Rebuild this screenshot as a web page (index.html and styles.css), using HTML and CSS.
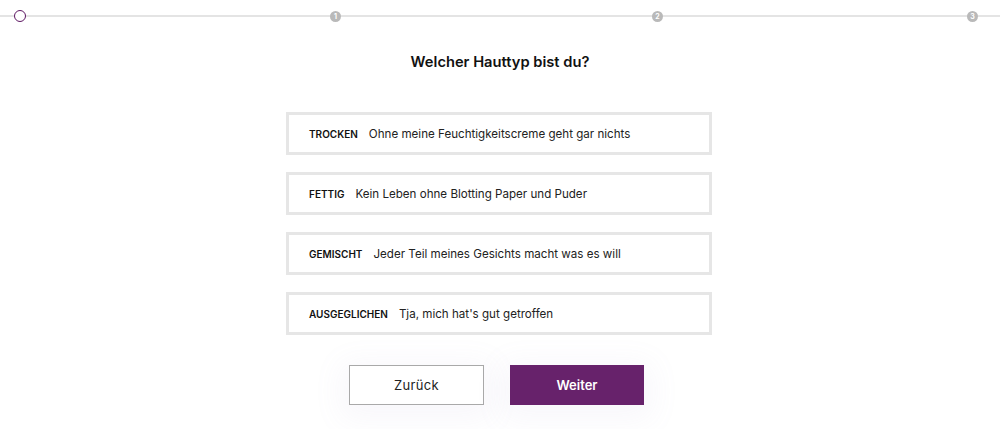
FILE: index.html
```html
<!DOCTYPE html>
<html lang="de">
<head>
<meta charset="utf-8">
<title>Hauttyp</title>
<link rel="stylesheet" href="styles.css">
</head>
<body>
<div class="page">
  <div class="progress">
    <div class="track"></div>
    <div class="steps">
      <span class="step current"></span>
      <span class="step s1">1</span>
      <span class="step s2">2</span>
      <span class="step s3">3</span>
    </div>
  </div>
  <h1 class="title">Welcher Hauttyp bist du?</h1>
  <div class="options">
    <div class="option"><span class="label">TROCKEN</span><span class="desc">Ohne meine Feuchtigkeitscreme geht gar nichts</span></div>
    <div class="option"><span class="label">FETTIG</span><span class="desc">Kein Leben ohne Blotting Paper und Puder</span></div>
    <div class="option"><span class="label">GEMISCHT</span><span class="desc">Jeder Teil meines Gesichts macht was es will</span></div>
    <div class="option"><span class="label">AUSGEGLICHEN</span><span class="desc">Tja, mich hat's gut getroffen</span></div>
  </div>
  <div class="actions">
    <button class="btn btn-back">Zurück</button>
    <button class="btn btn-next">Weiter</button>
  </div>
</div>
</body>
</html>
```

FILE: styles.css
```css
* { box-sizing: border-box; }
html, body { margin: 0; padding: 0; background: #fff; }
body { font-family: Inter, "Noto Sans", sans-serif; color: #111; }
.page { width: 1000px; height: 429px; overflow: hidden; }

.progress { position: relative; height: 31px; padding-top: 10px; }
.track { position: absolute; left: 0; right: 0; top: 15px; height: 2px; background: #e4e4e4; }
.steps { position: relative; display: flex; align-items: center; padding-left: 14px; }
.step {
  width: 11px; height: 11px; border-radius: 50%;
  background: #b9b9b9; color: #fff;
  font-size: 7px; font-weight: 700; line-height: 11px; text-align: center;
}
.step.current { width: 12px; height: 12px; background: #fff; border: 1.6px solid #5e1763; }
.step.s1 { margin-left: 304px; }
.step.s2 { margin-left: 311px; }
.step.s3 { margin-left: 304px; }

.title {
  margin: 21px 0 0; text-align: center;
  font-size: 14.7px; font-weight: 600; line-height: 20px; color: #111;
}

.options { display: flex; flex-direction: column; align-items: center; gap: 17px; margin-top: 40px; padding-right: 2px; }
.option {
  width: 426px; height: 43px;
  border: 3px solid #e6e6e6; background: #fff;
  display: flex; align-items: center; padding-left: 20px;
}
.label { font-size: 10px; font-weight: 600; margin-right: 11px; color: #111; }
.desc { font-size: 11.6px; color: #222; }

.actions { display: flex; justify-content: center; gap: 26px; margin-top: 30px; padding-right: 7px; }
.btn {
  width: 135px; height: 40px;
  font-family: Inter, "Noto Sans", sans-serif; font-size: 13px;
  box-shadow: 0 6px 30px 8px rgba(150, 140, 200, 0.07);
  cursor: pointer;
}
.btn-back { background: #fff; border: 1px solid #a9a9a9; color: #222; letter-spacing: 0.3px; }
.btn-next { width: 134px; background: #67226b; border: 1px solid #67226b; color: #fff; font-weight: 600; }
```
